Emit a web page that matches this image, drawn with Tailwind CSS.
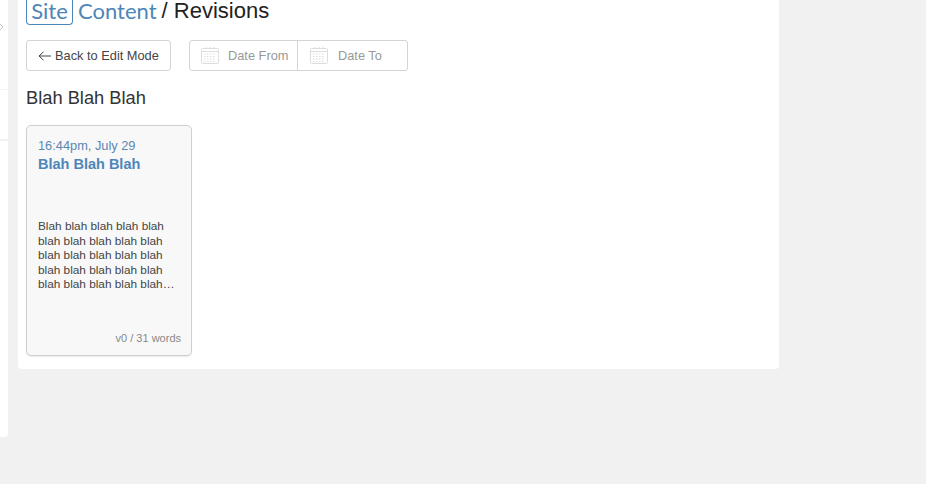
<!DOCTYPE html>
<html>
<head>
<meta charset="utf-8">
<script src="https://cdn.jsdelivr.net/npm/@tailwindcss/browser@4"></script>
</head>
<body class="bg-[#f1f1f1] overflow-hidden font-['Liberation_Sans',Arial,sans-serif]">
<div class="w-[926px] h-[484px] overflow-hidden flex items-start">
  <aside class="w-[8px] h-[437px] bg-white rounded-br-[3px] shrink-0 flex flex-col overflow-hidden">
    <div class="h-[90px] border-b border-[#f5f5f5] relative">
      <svg class="absolute -left-[4px] top-[22px]" width="10" height="10" viewBox="0 0 10 10" fill="none" stroke="#c4c4c4" stroke-width="1"><path d="M3 1l4 4-4 4"/></svg>
    </div>
    <div class="h-[51px] border-b-2 border-[#f1f1f1]"></div>
  </aside>
  <main class="ml-[10px] w-[761px] h-[369px] bg-white rounded-b-[4px] pl-[8px] shrink-0">
    <h1 class="flex items-start h-[25px] text-[22px] leading-[22px] text-[#222]">
      <span class="font-['Lato',sans-serif] text-[#4d86b8] border border-[#4d86b8] border-t-0 rounded-b-[4px] h-[25px] w-[47px] text-center">Site</span>
      <span class="font-['Lato',sans-serif] text-[#4d86b8] ml-[5px]">Content</span>
      <span class="ml-[5px]">/ Revisions</span>
    </h1>
    <div class="flex items-center mt-[15px]">
      <button class="h-[31px] w-[145px] flex items-center pl-[11px] border border-[#d4d4d4] rounded-[3px] bg-white text-[12.8px] text-[#444]">
        <svg width="13" height="10" viewBox="0 0 13 10" fill="none" stroke="#444" stroke-width="1"><path d="M13 5H1M5.5 .8L1 5l4.5 4.2"/></svg>
        <span class="ml-[4px]">Back to Edit Mode</span>
      </button>
      <div class="ml-[18px] h-[31px] w-[219px] flex border border-[#d4d4d4] rounded-[3px] text-[12.8px] text-[#999]">
        <div class="w-[108px] flex items-center pl-[11px] border-r border-[#d4d4d4]">
          <svg width="18" height="17" viewBox="0 0 18 17" fill="none" stroke="#ddd" stroke-width="1"><rect x=".5" y="1.5" width="17" height="15" rx="1"/><path d="M1 4.5h16M5 0v2M9 0v2M13 0v2"/><path stroke-dasharray="1.5 1.5" d="M3 7h12M3 9.5h12M3 12h12M3 14.5h12"/></svg>
          <span class="ml-[9px]">Date From</span>
        </div>
        <div class="flex-1 flex items-center pl-[12px]">
          <svg width="18" height="17" viewBox="0 0 18 17" fill="none" stroke="#ddd" stroke-width="1"><rect x=".5" y="1.5" width="17" height="15" rx="1"/><path d="M1 4.5h16M5 0v2M9 0v2M13 0v2"/><path stroke-dasharray="1.5 1.5" d="M3 7h12M3 9.5h12M3 12h12M3 14.5h12"/></svg>
          <span class="ml-[10px]">Date To</span>
        </div>
      </div>
    </div>
    <h2 class="mt-[15px] text-[18.3px] leading-[24px] text-[#333]">Blah Blah Blah</h2>
    <article class="mt-[15px] w-[166px] h-[231px] border border-[#cfcfcf] rounded-[5px] bg-[#f8f8f8] shadow-[0_1px_1px_rgba(0,0,0,0.08)] px-[11px] flex flex-col">
      <div class="mt-[13px] text-[12.8px] leading-[14px] text-[#5b87b2]">16:44pm, July 29</div>
      <div class="mt-[3px] text-[14.5px] leading-[16px] font-bold text-[#4d86b8]">Blah Blah Blah</div>
      <p class="mt-[47px] text-[11.8px] leading-[14.5px] text-[#444] w-[143px]">Blah blah blah blah blah blah blah blah blah blah blah blah blah blah blah blah blah blah blah blah blah blah blah blah blah…</p>
      <div class="mt-auto mb-[10px] -mr-[1px] text-right text-[11px] leading-[14px] text-[#888]">v0 / 31 words</div>
    </article>
  </main>
</div>
</body>
</html>
